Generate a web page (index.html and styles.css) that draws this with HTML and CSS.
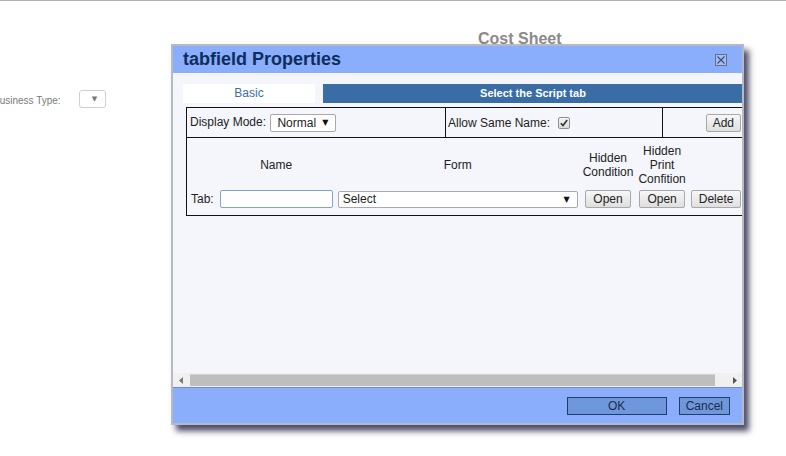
FILE: index.html
```html
<!DOCTYPE html>
<html lang="en">
<head>
    <meta charset="UTF-8">
    <title>tabfield Properties</title>
    <link rel="stylesheet" href="styles.css">
</head>
<body>
    <div class="page">
        <h2 class="page-title">Cost Sheet</h2>
        <div class="field-row">
            <label class="field-label">Business Type:</label>
            <span class="mini-select">&#9660;</span>
        </div>
    </div>

    <!-- properties dialog -->
    <div class="dialog">
        <div class="dialog-title">
            <span>tabfield Properties</span>
            <svg class="close" width="12" height="12" viewBox="0 0 12 12">
                <rect x="0.5" y="0.5" width="11" height="11" fill="#a4bdf6" stroke="#5d6f93"/>
                <path d="M2.5 2.5 L9.5 9.5 M9.5 2.5 L2.5 9.5" stroke="#3f4c66" stroke-width="1.1"/>
            </svg>
        </div>

        <div class="dialog-body">
            <div class="tabs">
                <div class="tab tab-basic">Basic</div>
                <div class="tab tab-script">Select the Script tab</div>
            </div>

            <table class="props">
                <tr class="top-row">
                    <td class="c-mode">
                        Display Mode:
                        <span class="select select-mode">Normal <i>&#9660;</i></span>
                    </td>
                    <td class="c-allow">
                        Allow Same Name:
                        <span class="check">
                            <svg width="8" height="8" viewBox="0 0 8 8"><path d="M0.8 4.2 L3 6.6 L7.2 1" fill="none" stroke="#333" stroke-width="1.6"/></svg>
                        </span>
                    </td>
                    <td class="c-add"><button class="btn">Add</button></td>
                </tr>
                <tr>
                    <td colspan="3" class="c-list">
                        <table class="tab-list">
                            <tr class="head">
                                <th></th>
                                <th>Name</th>
                                <th>Form</th>
                                <th>Hidden<br>Condition</th>
                                <th>Hidden<br>Print<br>Confition</th>
                                <th></th>
                            </tr>
                            <tr>
                                <td class="lbl">Tab:</td>
                                <td><input type="text" class="name-input"></td>
                                <td><span class="select select-form">Select <i>&#9660;</i></span></td>
                                <td><button class="btn">Open</button></td>
                                <td><button class="btn">Open</button></td>
                                <td><button class="btn">Delete</button></td>
                            </tr>
                        </table>
                    </td>
                </tr>
            </table>
        </div>

        <!-- horizontal scroll bar -->
        <div class="hscroll">
            <span class="arrow"><svg width="4" height="7" viewBox="0 0 4 7"><path d="M4 0 L0 3.5 L4 7 Z" fill="#7a7a7a"/></svg></span>
            <div class="track"><div class="thumb"></div></div>
            <span class="arrow"><svg width="4" height="7" viewBox="0 0 4 7"><path d="M0 0 L4 3.5 L0 7 Z" fill="#555"/></svg></span>
        </div>

        <div class="dialog-foot">
            <button class="foot-btn ok">OK</button>
            <button class="foot-btn">Cancel</button>
        </div>
    </div>
</body>
</html>
```

FILE: styles.css
```css
body {
    margin: 0;
    font-family: "Liberation Sans", Arial, sans-serif;
    background-color: #fff;
    color: #222;
}
.page {
    border-top: 1px solid #b0b0b0;
    height: 455px;
}
.page-title {
    margin: 0;
    padding: 29px 0 0 478px;
    font-size: 16px;
    line-height: 18px;
    color: #8a8a8a;
}
.field-row {
    display: flex;
    align-items: flex-start;
    margin-top: 42px;
    height: 18px;
}
.field-label {
    margin-left: -7px;
    padding-top: 2px;
    font-size: 10px;
    line-height: 18px;
    color: #7a7a7a;
}
.mini-select {
    box-sizing: border-box;
    width: 27px;
    height: 18px;
    margin-left: 18px;
    padding-left: 12px;
    border: 1px solid #d0d0d0;
    border-radius: 3px;
    font-family: "DejaVu Sans", sans-serif;
    font-size: 7px;
    line-height: 16px;
    color: #777;
}

/* dialog */
.dialog {
    position: absolute;
    left: 171px;
    top: 44px;
    width: 569px;
    height: 377px;
    border: 2px solid #b7b9c5;
    background-color: #f4f6fc;
    box-shadow: 5px 6px 6px rgba(45, 45, 75, 0.85);
    display: flex;
    flex-direction: column;
}
.dialog-title {
    height: 27px;
    flex: none;
    display: flex;
    align-items: center;
    justify-content: space-between;
    padding: 0 15px 0 10px;
    background-color: #8aaefb;
    font-size: 18px;
    font-weight: bold;
    line-height: 27px;
    color: #0f2d5c;
}
.close {
    display: block;
    margin-top: 1px;
}
.dialog-body {
    flex: 1;
    overflow: hidden;
    padding: 11px 0 0 10px;
    font-size: 12px;
}
.tabs {
    display: flex;
    gap: 8px;
    height: 19px;
}
.tab {
    flex: none;
    text-align: center;
    line-height: 19px;
}
.tab-basic {
    width: 132px;
    background-color: #fff;
    color: #3b6ea6;
}
.tab-script {
    width: 420px;
    background-color: #3a6da5;
    color: #fff;
    font-weight: bold;
    font-size: 11px;
}

/* property table */
.props {
    width: 560px;
    margin: 4px 0 0 3px;
    border-collapse: collapse;
}
.props > tbody > tr > td {
    border: 1px solid #111;
    padding: 0;
}
.top-row td {
    height: 29px;
    vertical-align: middle;
}
.c-mode {
    width: 255px;
    padding-left: 3px !important;
}
.c-allow {
    width: 214px;
    padding-left: 2px !important;
}
.c-add {
    text-align: right;
    padding-right: 4px !important;
}
.c-list {
    padding: 2px 0 4px !important;
}
.select {
    display: inline-flex;
    align-items: center;
    justify-content: space-between;
    box-sizing: border-box;
    background-color: #fff;
    border: 1px solid #a9a9a9;
    border-radius: 2px;
    vertical-align: middle;
}
.select i {
    font-style: normal;
    font-family: "DejaVu Sans", sans-serif;
    font-size: 8px;
    color: #111;
}
.select-mode {
    width: 66px;
    height: 18px;
    padding: 0 7px 0 6px;
    margin-left: 1px;
}
.select-form {
    width: 240px;
    height: 17px;
    padding: 0 7px 0 4px;
}
.check {
    display: inline-flex;
    align-items: center;
    justify-content: center;
    box-sizing: border-box;
    width: 12px;
    height: 12px;
    margin-left: 5px;
    border: 1px solid #8f8f8f;
    border-radius: 2px;
    background: linear-gradient(#f4f4f4, #dcdcdc);
    vertical-align: middle;
}
.btn {
    height: 18px;
    padding: 0 7px;
    border: 1px solid #a8a8a8;
    border-radius: 2px;
    background: linear-gradient(#f7f7f7, #dfdfdf);
    font-family: "Liberation Sans", Arial, sans-serif;
    font-size: 12px;
    color: #222;
    vertical-align: middle;
}
.c-add .btn {
    padding: 0 6px;
}

/* tab list */
.tab-list {
    border-spacing: 1px;
}
.tab-list th,
.tab-list td {
    padding: 2px;
    text-align: center;
    vertical-align: middle;
}
.tab-list th {
    padding: 3px 2px 1px;
    font-weight: normal;
    line-height: 14px;
}
.tab-list .lbl {
    text-align: left;
    padding: 2px 3px;
}
.name-input {
    box-sizing: border-box;
    width: 113px;
    height: 18px;
    margin: 0;
    padding: 1px 3px;
    border: 1px solid #7fa3d2;
    border-radius: 2px;
    font-family: "Liberation Sans", Arial, sans-serif;
    font-size: 12px;
    outline: none;
    vertical-align: middle;
}

/* scroll bar */
.hscroll {
    flex: none;
    height: 14px;
    display: flex;
    align-items: center;
    background-color: #f0f0f0;
}
.arrow {
    width: 15px;
    display: flex;
    justify-content: center;
}
.track {
    flex: 1;
    height: 12px;
    padding-left: 2px;
}
.thumb {
    width: 525px;
    height: 12px;
    box-sizing: border-box;
    background-color: #bebebe;
    border-top: 1px solid #d2d2d2;
}

/* footer */
.dialog-foot {
    flex: none;
    height: 36px;
    border-top: 1px solid #6f8cc8;
    background-color: #8aaefb;
    display: flex;
    justify-content: flex-end;
    align-items: flex-start;
    gap: 12px;
    padding: 9px 12px 0 0;
    box-sizing: border-box;
}
.foot-btn {
    height: 18px;
    padding: 0 6px;
    border: 1px solid #1f3d6f;
    background-color: #6f97dc;
    font-family: "Liberation Sans", Arial, sans-serif;
    font-size: 12px;
    color: #1b2b48;
}
.foot-btn.ok {
    width: 100px;
}
```
